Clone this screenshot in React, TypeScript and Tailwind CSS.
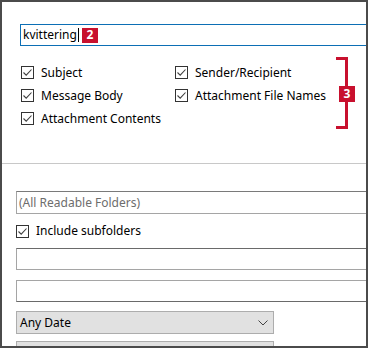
import React from "react";

function Box() {
  return (
    <span className="w-[13px] h-[13px] border border-[#333333] bg-white flex items-center justify-center shrink-0">
      <svg width="11" height="11" viewBox="0 0 11 11">
        <path d="M1.5 5.5 L4.2 8.2 L9.5 2.5" fill="none" stroke="#404040" strokeWidth="1.1" />
      </svg>
    </span>
  );
}

function Check({ label }: { label: string }) {
  return (
    <div className="flex items-center h-[23px]">
      <Box />
      <span className="ml-[7px] text-[12px] text-black leading-none whitespace-nowrap">{label}</span>
    </div>
  );
}

export default function App() {
  return (
    <div
      className="relative w-[368px] h-[348px] border-2 border-[#4b4b4b] bg-white overflow-hidden"
      style={{ fontFamily: '"Noto Sans", "Liberation Sans", sans-serif' }}
    >
      {/* search input row, overlapping frame's right border */}
      <div className="relative z-10 mt-[15px] -mr-[2px] bg-white py-[7px] pl-[18px]">
        <div className="h-[22px] border-y border-l border-[#0c6fb5] flex items-center pl-[2px]">
          <span className="text-[12px] text-black leading-none">kvittering</span>
          <span className="w-px h-[14px] bg-black ml-[1px]" />
          <span className="ml-[3px] w-[16px] h-[15px] bg-[#c8102e] text-white text-[12px] font-bold flex items-center justify-center leading-none">
            2
          </span>
        </div>
      </div>

      {/* checkboxes */}
      <div className="grid grid-cols-[154px_1fr] pl-[19px] mt-[8px]">
        <Check label="Subject" />
        <Check label="Sender/Recipient" />
        <Check label="Message Body" />
        <Check label="Attachment File Names" />
        <Check label="Attachment Contents" />
      </div>

      {/* annotation bracket 3 */}
      <div className="absolute left-[332px] top-[55px] w-[24px] h-[72px]">
        <div className="absolute left-[2px] top-0 w-[12px] h-[3px] bg-[#c8102e]" />
        <div className="absolute left-[11px] top-0 w-[3px] h-[72px] bg-[#c8102e]" />
        <div className="absolute left-[2px] bottom-0 w-[12px] h-[3px] bg-[#c8102e]" />
        <div className="absolute left-[5px] top-[29px] w-[16px] h-[16px] bg-[#c8102e] text-white text-[12px] font-bold flex items-center justify-center leading-none">
          3
        </div>
      </div>

      {/* separator */}
      <div className="mt-[33px] h-px bg-[#c8c8c8]" />

      <div className="pl-[14px] mt-[27px] flex flex-col">
        <div className="h-[23px] border border-[#a5a5a5] border-t-[#7a7a7a] border-r-0 flex items-center pl-[2px]">
          <span className="text-[12px] text-[#6d6d6d] leading-none">(All Readable Folders)</span>
        </div>
        <div className="mt-[10px] flex items-center h-[14px]">
          <Box />
          <span className="ml-[7px] text-[12px] text-black leading-none">Include subfolders</span>
        </div>
        <div className="mt-[10px] h-[22px] border border-[#a5a5a5] border-t-[#6a6a6a] border-r-0 bg-white" />
        <div className="mt-[10px] h-[22px] border border-[#a5a5a5] border-b-[#6a6a6a] border-r-0 bg-white" />
        <div className="mt-[9px] w-[258px] h-[23px] border border-[#adadad] bg-[#e1e1e1] flex items-center justify-between pl-[3px] pr-[5px]">
          <span className="text-[12px] text-black leading-none">Any Date</span>
          <svg width="10" height="6" viewBox="0 0 10 6">
            <path d="M0.5 0.5 L5 5 L9.5 0.5" fill="none" stroke="#444" strokeWidth="1" />
          </svg>
        </div>
        <div className="mt-[7px] w-[258px] h-[23px] border border-[#adadad] bg-[#e1e1e1]" />
      </div>
    </div>
  );
}
